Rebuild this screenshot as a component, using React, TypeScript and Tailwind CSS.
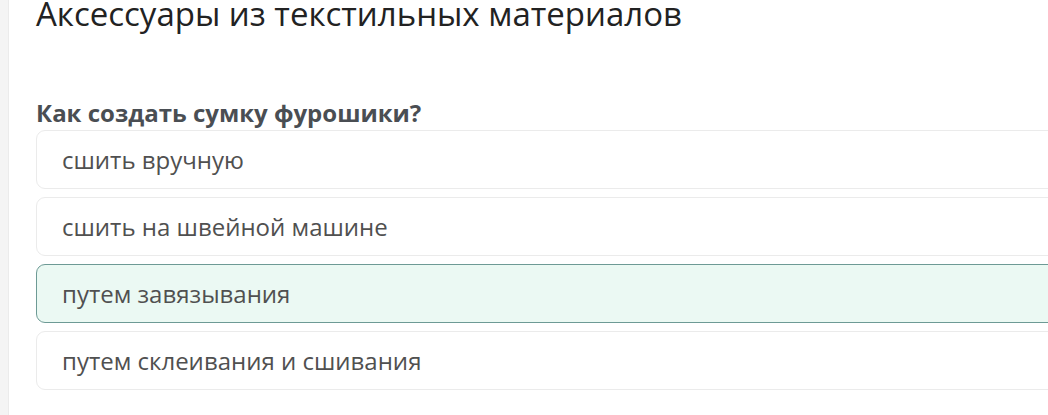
import React from "react";

const options = [
  { text: "сшить вручную", selected: false },
  { text: "сшить на швейной машине", selected: false },
  { text: "путем завязывания", selected: true },
  { text: "путем склеивания и сшивания", selected: false },
];

export default function App() {
  return (
    <div
      className="w-[1048px] h-[415px] overflow-hidden bg-[#f4f4f4] pl-[8px] flex"
      style={{ fontFamily: '"Open Sans", "Noto Sans", sans-serif' }}
    >
      <div className="flex-1 bg-white border-l border-[#ebebeb] pl-[27px] flex flex-col">
        <h1 className="text-[33px] leading-[28px] text-[#222] font-normal whitespace-nowrap">
          Аксессуары из текстильных материалов
        </h1>
        <h2 className="text-[24px] leading-[28px] font-bold text-[#4a4e53] mt-[71px] whitespace-nowrap">
          Как создать сумку фурошики?
        </h2>
        <div className="flex flex-col gap-[8px] mt-[3px] mr-[-20px]">
          {options.map((o) => (
            <div
              key={o.text}
              className={
                o.selected
                  ? "h-[59px] rounded-[9px] border border-[#6d9a95] bg-[#ebf9f3] flex items-center pl-[25px] text-[24px] text-[#505050]"
                  : "h-[59px] rounded-[9px] border border-[#ebebeb] bg-white flex items-center pl-[25px] text-[24px] text-[#505050]"
              }
            >
              {o.text}
            </div>
          ))}
        </div>
      </div>
    </div>
  );
}
